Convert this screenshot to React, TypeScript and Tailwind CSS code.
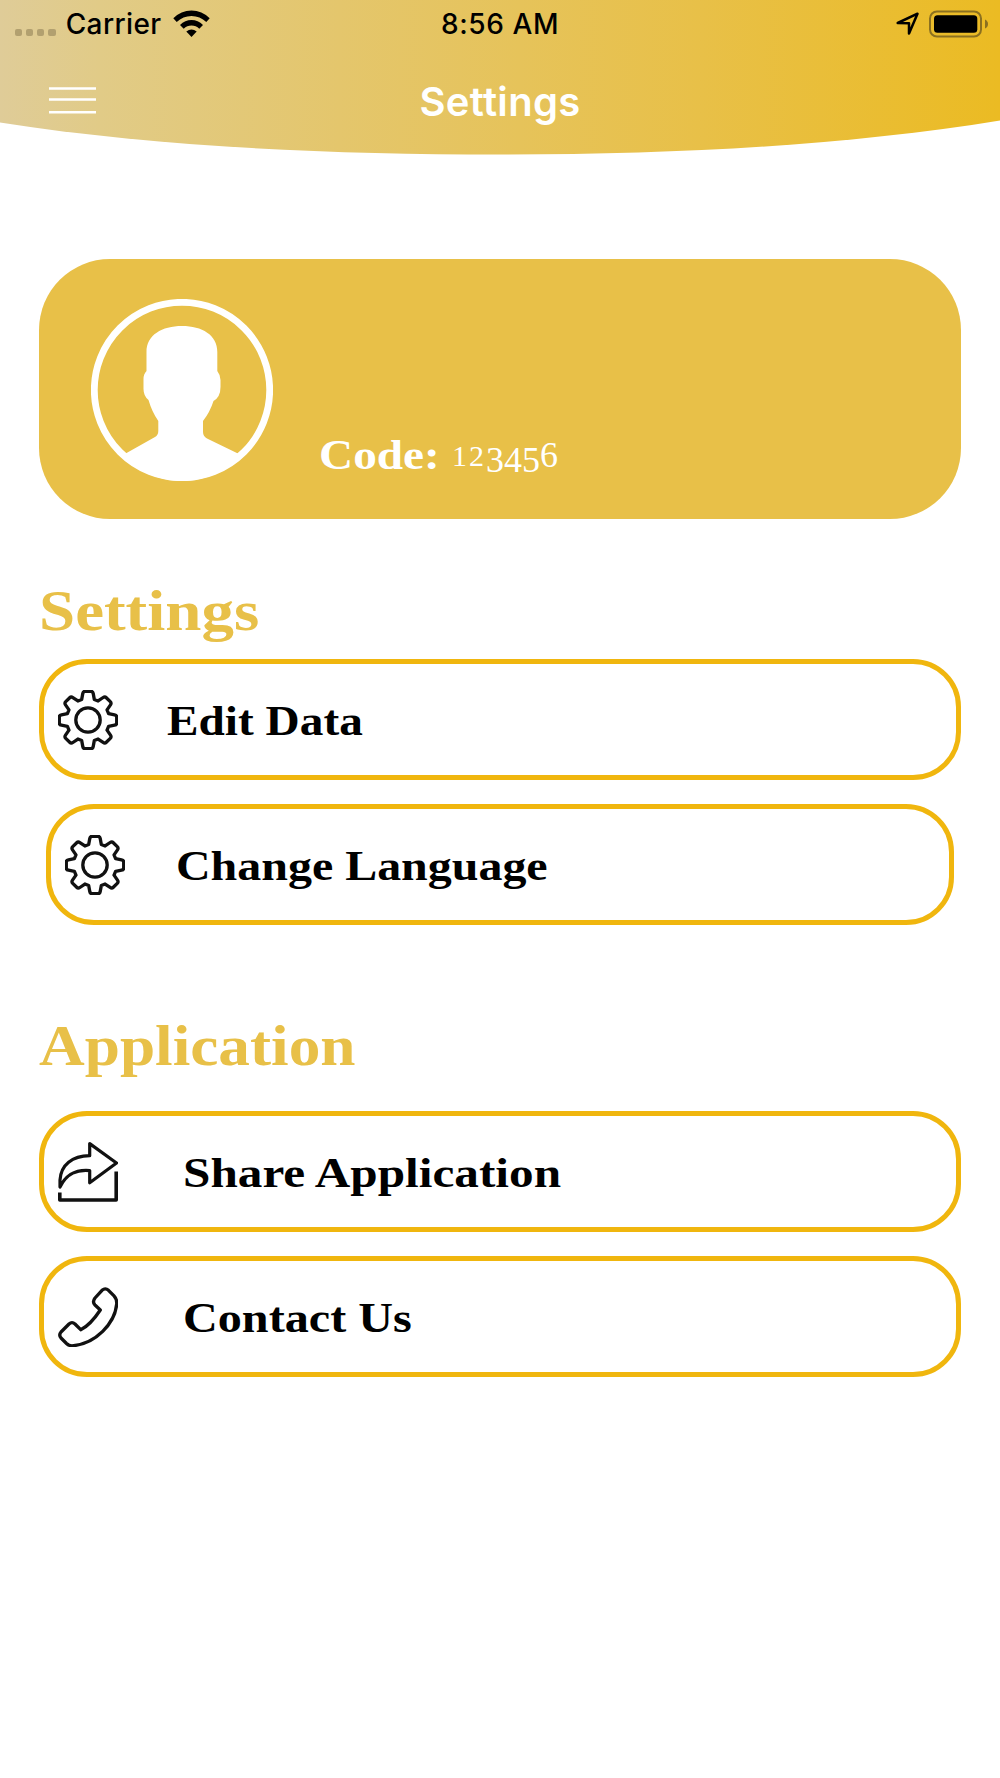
import type { ReactNode } from "react";

type RowProps = {
  icon: ReactNode;
  label: string;
  className?: string;
  labelClassName: string;
};

// one tooth of the gear, pointing up, repeated every 45 degrees
const TOOTH: [string, number[]][] = [
  ["L", [-6.3, -20.6]],
  ["L", [-5.2, -26.6]],
  ["Q", [-4.8, -28.7, -2.8, -28.7]],
  ["L", [2.8, -28.7]],
  ["Q", [4.8, -28.7, 5.2, -26.6]],
  ["L", [6.3, -20.6]],
];

function gearPath() {
  let d = "";
  for (let k = 0; k < 8; k++) {
    const a = (k * Math.PI) / 4;
    for (const [cmd, pts] of TOOTH) {
      d += d ? cmd : "M";
      for (let i = 0; i < pts.length; i += 2) {
        const x = 30 + pts[i] * Math.cos(a) - pts[i + 1] * Math.sin(a);
        const y = 30 + pts[i] * Math.sin(a) + pts[i + 1] * Math.cos(a);
        d += `${x.toFixed(2)} ${y.toFixed(2)} `;
      }
    }
  }
  return d + "Z";
}

const GEAR = gearPath();

function GearIcon() {
  return (
    <svg viewBox="0 0 60 60" className="mt-px size-15 shrink-0" fill="none" stroke="#111" strokeWidth="3.3" strokeLinejoin="round">
      <path d={GEAR} />
      <circle cx="30" cy="30" r="12.2" />
    </svg>
  );
}

function ShareIcon() {
  return (
    <svg viewBox="0 0 60 60" className="mt-px size-15 shrink-0" fill="none" stroke="#111" strokeWidth="3.2" strokeLinejoin="round">
      <path d="M2 45V38C3 23 14 14 31.7 13.7V1.6L58.5 21L31.7 40.8V28.6C19 27.5 9 31 2 45Z" />
      <path d="M1.8 50.5V58H58.2V29.5" strokeWidth="3.6" />
    </svg>
  );
}

function PhoneIcon() {
  return (
    <svg viewBox="0 0 60 60" className="mt-px size-15 shrink-0" fill="none" stroke="#111" strokeWidth="3.3" strokeLinejoin="round">
      <path d="M44 3.3Q47.3.5 50.5 3.3L56 8.8Q59 12 58.7 17C57 36 38 57 14 58.8Q11 58.8 8.5 56.5L3 51Q.5 48 3 45L11 37Q14 34.3 17 37L22.7 42.7Q32 38.5 42.3 23L37 18Q34 15 37 11Z" />
    </svg>
  );
}

function Avatar() {
  return (
    <svg viewBox="0 0 182 182" className="mt-px size-[182px] shrink-0">
      <circle cx="91" cy="91" r="87.7" fill="none" stroke="#fff" strokeWidth="6.8" />
      <path
        fill="#fff"
        d="M55.5 53C55.5 36 71 27 91 27S126.300 36 126.300 53V72Q129.500 76 129.500 81V88Q129.500 98 122.500 102Q119 113 112 122V133Q112 137 116 139.500L150 156Q125 182 91 182T32 156L64 138Q67.300 136 67.300 132V122Q61 113 57.500 101Q52.500 97 52.500 90V80Q52.500 75 55.500 72Z"
      />
    </svg>
  );
}

function Row({ icon, label, className = "", labelClassName }: RowProps) {
  return (
    <button
      type="button"
      className={`flex h-[121px] items-center rounded-[48px] border-5 border-[#f0b60e] bg-white pl-[14px] text-left ${className}`}
    >
      {icon}
      <span
        className={`mt-px origin-left whitespace-nowrap font-['Liberation_Serif',serif] text-[43px] leading-none font-bold text-black ${labelClassName}`}
      >
        {label}
      </span>
    </button>
  );
}

function SectionTitle({ children, className }: { children: ReactNode; className: string }) {
  return (
    <h2
      className={`origin-left whitespace-nowrap font-['Liberation_Serif',serif] text-[56px] leading-none font-bold text-[#e8c048] ${className}`}
    >
      {children}
    </h2>
  );
}

function StatusBar() {
  return (
    <div className="relative flex h-12 items-center text-[28px] leading-none font-medium text-black">
      <div className="flex w-1/2 items-center pl-[14.500px]">
        <div className="mt-[17px] flex gap-[3.600px]">
          <i className="size-[7.600px] rounded-[2px] bg-[#b2a06f]" />
          <i className="size-[7.600px] rounded-[2px] bg-[#b2a06f]" />
          <i className="size-[7.600px] rounded-[2px] bg-[#b2a06f]" />
          <i className="size-[7.600px] rounded-[2px] bg-[#b2a06f]" />
        </div>
        <span className="ml-[10px] tracking-[0.400px]">Carrier</span>
        <svg viewBox="0 0 37 28" className="ml-[11px] h-7 w-[37px]">
          <path d="M.3 8.300Q8 .5 18.500.5T36.700 8.300L33.300 12Q27 6 18.500 6T3.700 12Z" />
          <path d="M7 15Q12 10 18.500 10T30 15L26.300 18.800Q23 15.500 18.500 15.500T10.700 18.800Z" />
          <path d="M13.300 21.500Q18.500 17.300 23.700 21.500L18.500 27Z" />
        </svg>
      </div>
      <span className="absolute left-1/2 -translate-x-1/2 whitespace-nowrap tracking-[0.600px]">8:56 AM</span>
      <div className="flex w-1/2 items-center justify-end pr-[11px]">
        <svg viewBox="0 0 24 24" className="mr-[9px] size-6" fill="none" stroke="#000" strokeWidth="2.500" strokeLinejoin="round">
          <path d="M1.700 11L21.500 1.700L13 21.500V11.200Z" />
        </svg>
        <svg viewBox="0 0 60 28" className="h-7 w-[60px]">
          <rect x="1" y="1.500" width="51" height="25" rx="7" fill="none" stroke="#8b7020" strokeWidth="2" />
          <rect x="5" y="5.300" width="43.300" height="17.500" rx="3.500" />
          <path d="M56 9.500Q59 11 59 14T56 18.500Z" fill="#8b7020" />
        </svg>
      </div>
    </div>
  );
}

export default function App() {
  return (
    <div className="flex h-[1778px] w-[1000px] flex-col overflow-hidden bg-white">
      <header className="relative h-[155px] shrink-0 font-['Inter',sans-serif]">
        <svg viewBox="0 0 1000 155" className="absolute inset-0 h-full w-full">
          <defs>
            <linearGradient id="gold" x1="0" x2="1" y1="0" y2="0">
              <stop offset="0" stopColor="#dfcc98" />
              <stop offset="0.1" stopColor="#e1cb87" />
              <stop offset="0.34" stopColor="#e4c66c" />
              <stop offset="0.7" stopColor="#e8c048" />
              <stop offset="1" stopColor="#ebbb23" />
            </linearGradient>
          </defs>
          <path d="M0 0H1000V120.500C850 145 680 154.500 500 154.500C320 154.500 150 146 0 122.500Z" fill="url(#gold)" />
        </svg>
        <StatusBar />
        <div className="relative flex h-[106px] items-start">
          <button type="button" aria-label="Menu" className="mt-[39px] ml-[49px]">
            <svg viewBox="0 0 47 28" className="h-7 w-[47px]" stroke="#fff" strokeWidth="2.500">
              <path d="M0 1.500H47M0 12.500H47M0 25.200H47" />
            </svg>
          </button>
          <h1 className="absolute top-[34px] left-1/2 -translate-x-1/2 text-[40px] leading-none font-semibold tracking-[0.300px] text-white">
            Settings
          </h1>
        </div>
      </header>

      <main className="flex flex-col px-[39px] pt-[104px]">
        <section className="flex h-[260px] items-center rounded-[71px] bg-[#e8c048] pl-[52px] text-white">
          <Avatar />
          <p className="mt-[130px] ml-[46px] flex items-baseline whitespace-nowrap font-['Liberation_Serif',serif] leading-none">
            <b className="w-[133px] origin-left scale-x-110 text-[43px]">Code:</b>
            <span className="relative -top-[3px] text-[36px]">
              <span className="text-[30px] tracking-[2px]">12</span>
              <span className="relative top-[6px]">345</span>
              <span className="relative top-px">6</span>
            </span>
          </p>
        </section>

        <SectionTitle className="mt-[64px] scale-x-116">Settings</SectionTitle>
        <div className="mt-[20px] flex flex-col gap-6">
          <Row icon={<GearIcon />} label="Edit Data" labelClassName="ml-[49px] scale-x-110" />
          <Row icon={<GearIcon />} label="Change Language" className="mx-[7px]" labelClassName="ml-[51px] scale-x-[1.115]" />
        </div>

        <SectionTitle className="mt-[93px] scale-x-113">Application</SectionTitle>
        <div className="mt-[37px] flex flex-col gap-6">
          <Row icon={<ShareIcon />} label="Share Application" labelClassName="ml-[65px] scale-x-[1.145]" />
          <Row icon={<PhoneIcon />} label="Contact Us" labelClassName="ml-[65px] scale-x-112" />
        </div>
      </main>
    </div>
  );
}
